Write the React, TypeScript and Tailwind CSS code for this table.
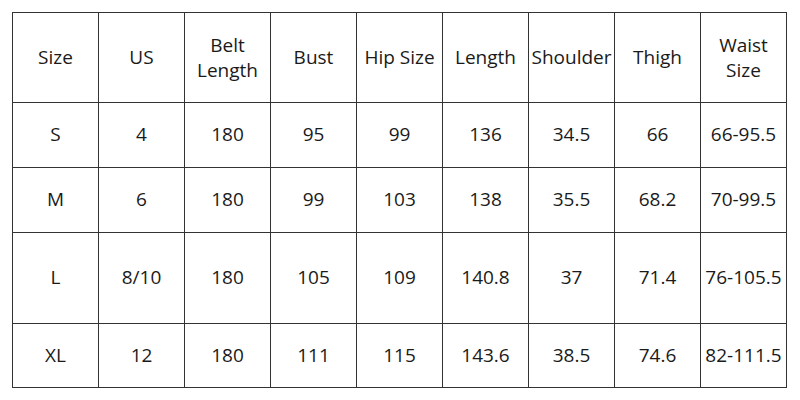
import React from 'react';

const headers: string[][] = [
  ['Size'],
  ['US'],
  ['Belt', 'Length'],
  ['Bust'],
  ['Hip Size'],
  ['Length'],
  ['Shoulder'],
  ['Thigh'],
  ['Waist', 'Size'],
];

const rows: string[][] = [
  ['S', '4', '180', '95', '99', '136', '34.5', '66', '66-95.5'],
  ['M', '6', '180', '99', '103', '138', '35.5', '68.2', '70-99.5'],
  ['L', '8/10', '180', '105', '109', '140.8', '37', '71.4', '76-105.5'],
  ['XL', '12', '180', '111', '115', '143.6', '38.5', '74.6', '82-111.5'],
];

const App: React.FC = () => {
  return (
    <div className="w-[800px] h-[400px] bg-white pt-[12px] pl-[12px] text-[#1a1a1a] font-['Open_Sans',sans-serif]">
      <div className="grid grid-cols-[repeat(9,86px)] grid-rows-[90px_65px_65px_91px_64px] w-fit border-l border-t border-[#333] text-[19px] leading-[25px]">
        {headers.map((h, i) => (
          <div key={i} className="flex flex-col items-center justify-center border-r border-b border-[#333] text-center whitespace-nowrap">
            {h.map((line) => (
              <span key={line}>{line}</span>
            ))}
          </div>
        ))}
        {rows.map((row, r) =>
          row.map((cell, c) => (
            <div key={`${r}-${c}`} className="flex items-center justify-center border-r border-b border-[#333] whitespace-nowrap pb-[1px]">
              {cell}
            </div>
          ))
        )}
      </div>
    </div>
  );
};

export default App;
